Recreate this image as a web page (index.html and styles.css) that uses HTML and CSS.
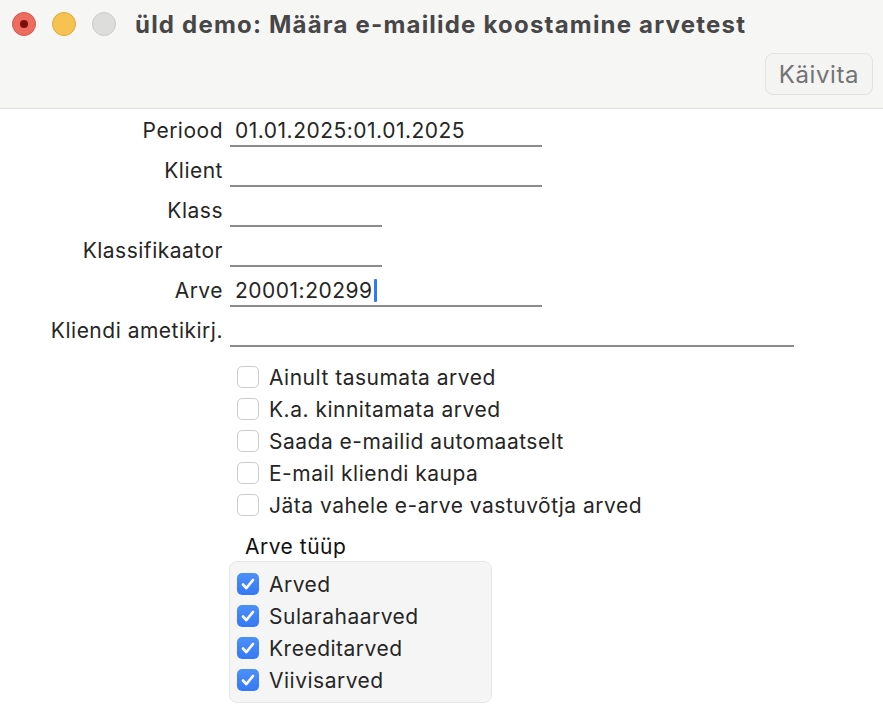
FILE: index.html
```html
<!DOCTYPE html>
<html lang="et">
<head>
    <meta charset="UTF-8">
    <meta name="viewport" content="width=device-width, initial-scale=1.0">
    <title>Määra e-mailide koostamine arvetest</title>
    <link rel="stylesheet" href="styles.css">
</head>
<body>
    <div class="titlebar">
        <div class="titlerow">
            <div class="lights">
                <span class="light close"></span>
                <span class="light minimize"></span>
                <span class="light zoom"></span>
            </div>
            <h1>üld demo: Määra e-mailide koostamine arvetest</h1>
        </div>
        <div class="toolbar">
            <button class="run-button">Käivita</button>
        </div>
    </div>

    <div class="form">
        <div class="row">
            <label>Periood</label>
            <div class="field wide">01.01.2025:01.01.2025</div>
        </div>
        <div class="row">
            <label>Klient</label>
            <div class="field wide"></div>
        </div>
        <div class="row">
            <label>Klass</label>
            <div class="field short"></div>
        </div>
        <div class="row">
            <label>Klassifikaator</label>
            <div class="field short"></div>
        </div>
        <div class="row">
            <label>Arve</label>
            <div class="field wide">20001:20299<span class="caret"></span></div>
        </div>
        <div class="row">
            <label>Kliendi ametikirj.</label>
            <div class="field full"></div>
        </div>

        <div class="options">
            <div class="check"><span class="box"></span>Ainult tasumata arved</div>
            <div class="check"><span class="box"></span>K.a. kinnitamata arved</div>
            <div class="check"><span class="box"></span>Saada e-mailid automaatselt</div>
            <div class="check"><span class="box"></span>E-mail kliendi kaupa</div>
            <div class="check"><span class="box"></span>Jäta vahele e-arve vastuvõtja arved</div>
        </div>

        <div class="group-title">Arve tüüp</div>
        <div class="group">
            <div class="check"><span class="box checked"><svg viewBox="0 0 22 22"><path d="M6 11.5l3.3 3.6L16 7"/></svg></span>Arved</div>
            <div class="check"><span class="box checked"><svg viewBox="0 0 22 22"><path d="M6 11.5l3.3 3.6L16 7"/></svg></span>Sularahaarved</div>
            <div class="check"><span class="box checked"><svg viewBox="0 0 22 22"><path d="M6 11.5l3.3 3.6L16 7"/></svg></span>Kreeditarved</div>
            <div class="check"><span class="box checked"><svg viewBox="0 0 22 22"><path d="M6 11.5l3.3 3.6L16 7"/></svg></span>Viivisarved</div>
        </div>
    </div>
</body>
</html>
```

FILE: styles.css
```css
/* General */
body {
    margin: 0;
    font-family: Inter, "Noto Sans", sans-serif;
    background: #fff;
    color: #262626;
}

/* Window title bar */
.titlebar {
    height: 109px;
    box-sizing: border-box;
    padding: 12px 10px 0 12px;
    background: #f6f6f5;
    border-bottom: 1px solid #dedede;
}

.titlerow {
    display: flex;
    align-items: center;
    height: 24px;
}

.lights {
    display: flex;
    gap: 16px;
}

.light {
    width: 24px;
    height: 24px;
    box-sizing: border-box;
    border-radius: 50%;
    display: flex;
    align-items: center;
    justify-content: center;
}

.light.close {
    background: #ee6b60;
    border: 1px solid #d9574d;
}

.light.close::after {
    content: "";
    width: 8px;
    height: 8px;
    border-radius: 50%;
    background: #7a1008;
}

.light.minimize {
    background: #f6c251;
    border: 1px solid #dfa93a;
}

.light.zoom {
    background: #dddddc;
    border: 1px solid #c9c9c8;
}

.titlerow h1 {
    margin: 0 0 0 19px;
    font-size: 24px;
    font-weight: 700;
    color: #474747;
    letter-spacing: 1.2px;
}

.toolbar {
    display: flex;
    justify-content: flex-end;
    margin-top: 17px;
}

.run-button {
    width: 108px;
    height: 42px;
    border: 1px solid #e3e3e2;
    border-radius: 8px;
    background: #f4f4f3;
    color: #737373;
    font-family: Inter, "Noto Sans", sans-serif;
    font-size: 24px;
    letter-spacing: 0.6px;
    padding: 0;
}

/* Form */
.form {
    padding-top: 7px;
    font-size: 21px;
    letter-spacing: 0.5px;
}

.row {
    display: flex;
    height: 40px;
}

.row label {
    width: 223px;
    text-align: right;
    line-height: 30px;
}

.field {
    margin-left: 7px;
    height: 29px;
    border-bottom: 2px solid #8a8a8a;
    box-sizing: content-box;
    padding-left: 5px;
    line-height: 30px;
    display: flex;
    align-items: center;
}

.field.wide { width: 307px; }
.field.short { width: 147px; }
.field.full { width: 559px; }

.caret {
    display: inline-block;
    width: 3px;
    height: 23px;
    margin-left: 1px;
    background: #2f7bf5;
    border-radius: 1px;
}

/* Checkboxes */
.options {
    margin-top: 5px;
    padding-left: 237px;
}

.check {
    display: flex;
    align-items: center;
    height: 32px;
}

.box {
    width: 22px;
    height: 22px;
    box-sizing: border-box;
    border: 1px solid #cdcdcd;
    border-radius: 5px;
    background: #fff;
    margin-right: 10px;
    display: flex;
}

.box.checked {
    border: none;
    background: linear-gradient(#4d90f8, #3478f6);
}

.box svg {
    width: 22px;
    height: 22px;
    fill: none;
    stroke: #fff;
    stroke-width: 2.6;
    stroke-linecap: round;
    stroke-linejoin: round;
}

.group-title {
    margin: 14px 0 0 245px;
    line-height: 24px;
    color: #111;
}

.group {
    margin: 2px 0 0 229px;
    width: 263px;
    box-sizing: border-box;
    padding: 6px 7px;
    background: #f5f5f5;
    border: 1px solid #e7e7e7;
    border-radius: 8px;
}
```
